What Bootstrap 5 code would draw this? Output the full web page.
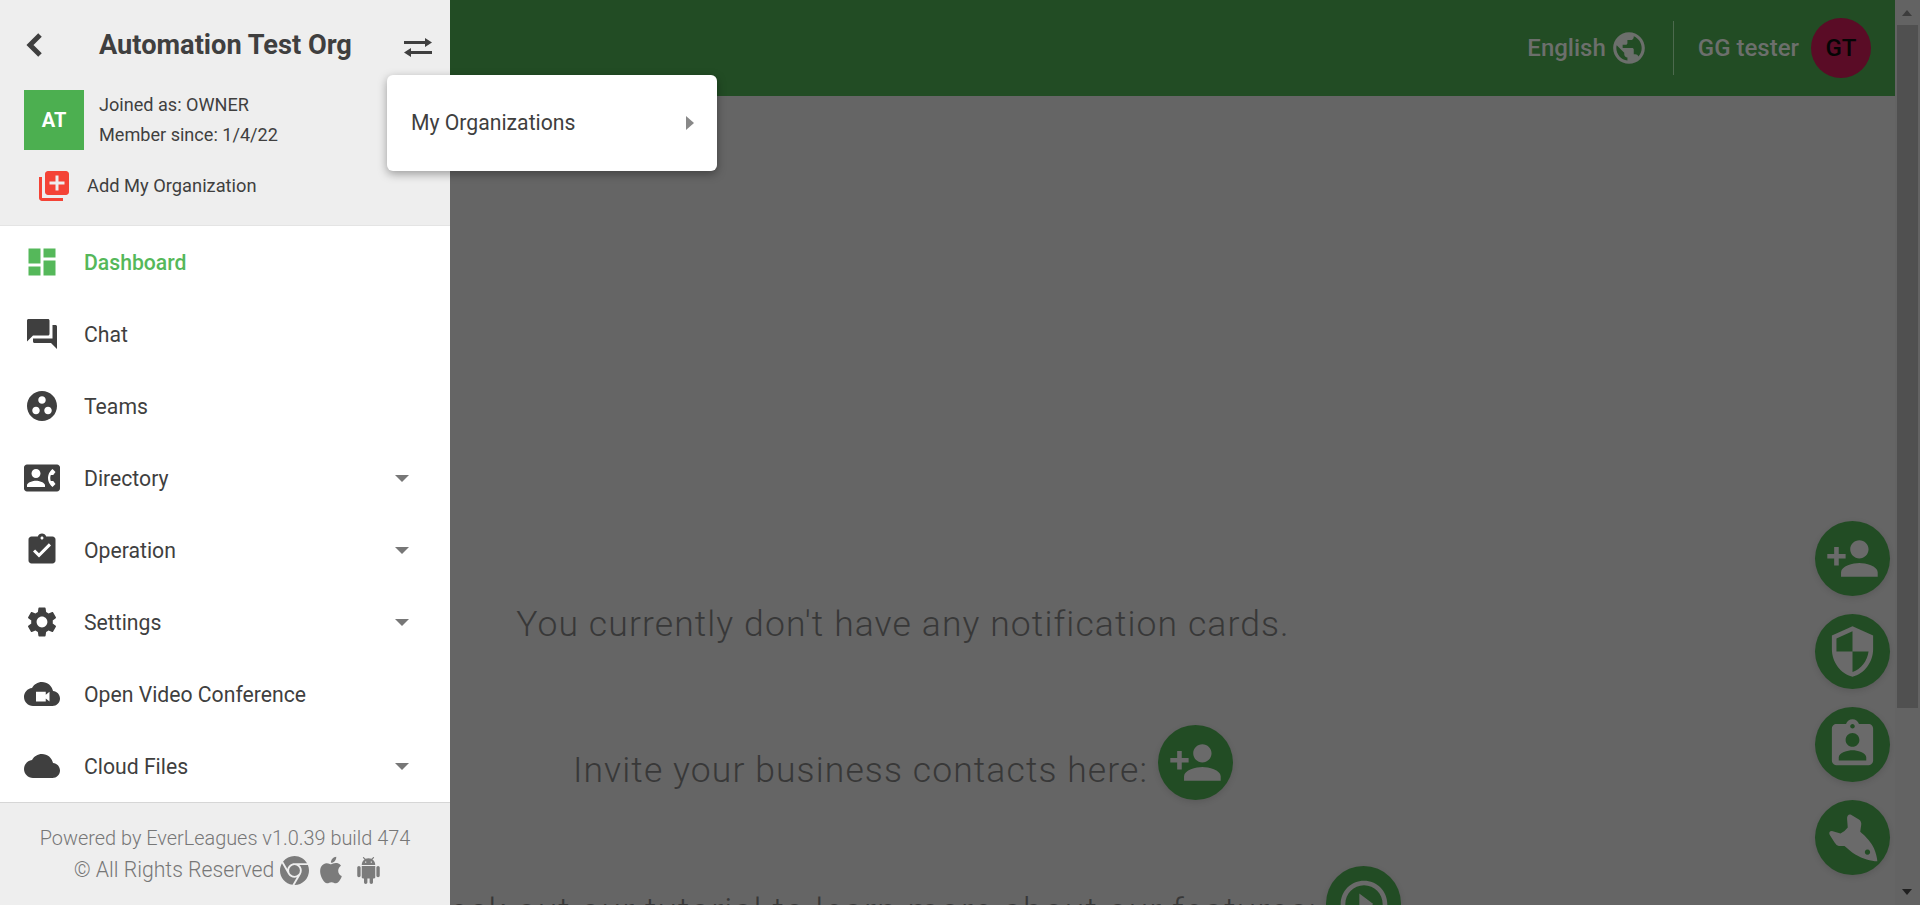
<!DOCTYPE html>
<html lang="en">
<head>
  <meta charset="UTF-8">
  <meta name="viewport" content="width=device-width, initial-scale=1.0">
  <title>EverLeagues - Dashboard</title>
  <link href="https://cdn.jsdelivr.net/npm/bootstrap@5.3.0/dist/css/bootstrap.min.css" rel="stylesheet">
  <style>
    html, body {
      height: 100%;
      overflow: hidden;
    }
    body {
      background-color: #656565;
      font-family: Roboto, "Liberation Sans", sans-serif;
      color: #3f3f3f;
    }
    /* Main page, dimmed by the open drawer */
    .page-col {
      width: 1895px;
      height: 905px;
    }
    .top-bar {
      height: 96px;
      background-color: #224c24;
      padding-right: 24px;
    }
    .top-label {
      font-size: 24px;
      font-weight: 500;
      color: #6c6f6c;
    }
    .top-divider {
      width: 1px;
      height: 54px;
      background-color: #4d6a4e;
      margin: 0 24px 0 25px;
    }
    .user-dot {
      width: 60px;
      height: 60px;
      margin-left: 12px;
      background-color: #5a0c26;
      color: #050505;
      font-size: 24px;
      font-weight: 500;
    }
    .notice-area {
      padding: 0 89px 0 0;
      font-size: 35.5px;
      font-weight: 300;
      letter-spacing: 1.1px;
      color: #383838;
      white-space: nowrap;
    }
    .notice-first { margin-top: 506px; height: 44px; line-height: 44px; }
    .notice-row { height: 76px; margin-top: 78px; gap: 10px; }
    .notice-row > span:first-child { padding-top: 18px; }
    .notice-cut { margin-top: 66px; gap: 9px; }
    .notice-cut > span:first-child { padding-top: 16px; }
    .fab-dot {
      width: 75px;
      height: 75px;
      flex: none;
      background-color: #224c24;
      box-shadow: 0 2px 6px rgba(0, 0, 0, .12);
    }
    .fab-stack {
      right: 5px;
      bottom: 30px;
      gap: 18px;
    }
    /* Fake browser scrollbar */
    .scroll-col {
      width: 25px;
      height: 905px;
      background-color: #636363;
    }
    .scroll-thumb {
      left: 2px;
      top: 25px;
      width: 21px;
      height: 683px;
      background-color: #505050;
    }
    .scroll-up, .scroll-down {
      left: 7px;
      width: 0;
      height: 0;
      border-left: 5.5px solid transparent;
      border-right: 5.5px solid transparent;
    }
    .scroll-up { top: 10px; border-bottom: 6px solid #3c3c3c; }
    .scroll-down { bottom: 10px; border-top: 6px solid #202020; }
    /* Drawer */
    .drawer {
      left: 0;
      top: 0;
      width: 450px;
      height: 905px;
      background-color: #fff;
    }
    .drawer-head {
      height: 226px;
      background-color: #eee;
      border-bottom: 1px solid #e4e4e4;
      flex: none;
    }
    .org-row {
      height: 90px;
      padding: 0 18px 0 24px;
    }
    .org-name {
      font-size: 27.2px;
      font-weight: 700;
      color: #3f3f3f;
      margin-left: 53px;
    }
    .org-swap { margin-top: 4px; }
    .org-tile {
      width: 60px;
      height: 60px;
      background-color: #4caf50;
      color: #fff;
      font-size: 20px;
      font-weight: 700;
      flex: none;
    }
    .org-meta {
      font-size: 18.1px;
      line-height: 30px;
      margin-left: 15px;
    }
    .org-add {
      margin-top: 21px;
      padding-left: 39px;
      font-size: 18.3px;
      line-height: 30px;
      gap: 18px;
    }
    .menu-item {
      height: 72px;
      border: 0;
      padding: 0 41px 0 24px;
      font-size: 21.2px;
      color: #3f3f3f;
      background: transparent;
    }
    .menu-item.is-on { color: #55b85a; font-weight: 500; }
    .menu-item.is-on svg { fill: #55b85a; }
    .menu-text { padding-top: 2px; }
    .menu-icon {
      width: 36px;
      height: 36px;
      margin-right: 24px;
      flex: none;
      fill: #3f3f3f;
    }
    .caret-down {
      width: 0;
      height: 0;
      border-left: 7px solid transparent;
      border-right: 7px solid transparent;
      border-top: 7px solid #777;
    }
    .drawer-foot {
      height: 103px;
      background-color: #eee;
      border-top: 1px solid #d6d6d6;
      flex: none;
      padding-top: 21px;
      font-size: 19.9px;
      font-weight: 300;
      line-height: 30px;
      color: #777;
    }
    .foot-icons { font-size: 21.2px; padding-left: 6px; }
    .foot-icons svg { fill: #7b7b7b; flex: none; margin-left: 6px; }
    .foot-icons svg:last-child { margin-left: 8px; }
    .org-menu {
      left: 387px;
      top: 75px;
      width: 330px;
      height: 96px;
      border: 0;
      border-radius: 6px;
      padding: 0 23px 0 24px;
      font-size: 21.2px;
      color: #3f3f3f;
      box-shadow: 0 3px 10px rgba(0, 0, 0, .35);
    }
    .caret-right {
      width: 0;
      height: 0;
      border-top: 7px solid transparent;
      border-bottom: 7px solid transparent;
      border-left: 8px solid #888;
    }
  </style>
</head>
<body>

  <div class="d-flex position-relative">
    <!-- Main page -->
    <div class="page-col position-relative overflow-hidden">
      <header class="top-bar d-flex align-items-center justify-content-end">
        <span class="top-label">English</span>
        <svg class="ms-1" width="38" height="38" viewBox="0 0 24 24" fill="#6c6f6c"><path d="M12 2C6.48 2 2 6.48 2 12s4.48 10 10 10 10-4.48 10-10S17.52 2 12 2zm-1 17.93c-3.95-.49-7-3.85-7-7.93 0-.62.08-1.21.21-1.79L9 15v1c0 1.1.9 2 2 2v1.93zm6.9-2.54c-.26-.81-1-1.39-1.9-1.39h-1v-3c0-.55-.45-1-1-1H8v-2h2c.55 0 1-.45 1-1V7h2c1.1 0 2-.9 2-2v-.41c2.93 1.19 5 4.06 5 7.41 0 2.08-.8 3.97-2.1 5.39z"/></svg>
        <span class="top-divider"></span>
        <span class="top-label">GG tester</span>
        <span class="user-dot rounded-circle d-flex align-items-center justify-content-center">GT</span>
      </header>

      <div class="notice-area">
        <div class="notice-first text-center">You currently don't have any notification cards.</div>
        <div class="notice-row d-flex align-items-center justify-content-center">
          <span>Invite your business contacts here:</span>
          <span class="fab-dot rounded-circle d-flex align-items-center justify-content-center">
            <svg width="55" height="55" viewBox="0 0 24 24" fill="#6a6a6a"><path d="M15 12c2.21 0 4-1.79 4-4s-1.79-4-4-4-4 1.79-4 4 1.79 4 4 4zm-9-2V7H4v3H1v2h3v3h2v-3h3v-2H6zm9 4c-2.67 0-8 1.34-8 4v2h16v-2c0-2.66-5.33-4-8-4z"/></svg>
          </span>
        </div>
        <div class="notice-cut d-flex align-items-center justify-content-center">
          <span>Check out our tutorial to learn more about our features:</span>
          <span class="fab-dot rounded-circle d-flex align-items-center justify-content-center">
            <svg width="56" height="56" viewBox="0 0 24 24" fill="#6a6a6a"><path d="M10 16.5l6-4.5-6-4.5v9zM12 2C6.48 2 2 6.48 2 12s4.48 10 10 10 10-4.48 10-10S17.52 2 12 2zm0 18c-4.41 0-8-3.59-8-8s3.59-8 8-8 8 3.59 8 8-3.59 8-8 8z"/></svg>
          </span>
        </div>
      </div>

      <div class="fab-stack position-absolute d-flex flex-column">
        <span class="fab-dot rounded-circle d-flex align-items-center justify-content-center">
          <svg width="55" height="55" viewBox="0 0 24 24" fill="#6a6a6a"><path d="M15 12c2.21 0 4-1.79 4-4s-1.79-4-4-4-4 1.79-4 4 1.79 4 4 4zm-9-2V7H4v3H1v2h3v3h2v-3h3v-2H6zm9 4c-2.67 0-8 1.34-8 4v2h16v-2c0-2.66-5.33-4-8-4z"/></svg>
        </span>
        <span class="fab-dot rounded-circle d-flex align-items-center justify-content-center">
          <svg width="55" height="55" viewBox="0 0 24 24" fill="#6a6a6a"><path d="M12 1L3 5v6c0 5.55 3.84 10.74 9 12 5.16-1.26 9-6.45 9-12V5l-9-4zm0 10.99h7c-.53 4.12-3.28 7.79-7 8.94V12H5V6.3l7-3.11v8.8z"/></svg>
        </span>
        <span class="fab-dot rounded-circle d-flex align-items-center justify-content-center">
          <svg width="55" height="55" viewBox="0 0 24 24" fill="#6a6a6a"><path d="M19 3h-4.18C14.4 1.84 13.3 1 12 1c-1.3 0-2.4.84-2.82 2H5c-1.1 0-2 .9-2 2v14c0 1.1.9 2 2 2h14c1.1 0 2-.9 2-2V5c0-1.1-.9-2-2-2zm-7 0c.55 0 1 .45 1 1s-.45 1-1 1-1-.45-1-1 .45-1 1-1zm0 4c1.66 0 3 1.34 3 3s-1.34 3-3 3-3-1.34-3-3 1.34-3 3-3zm6 12H6v-1.4c0-2 4-3.1 6-3.1s6 1.1 6 3.1V19z"/></svg>
        </span>
        <span class="fab-dot rounded-circle d-flex align-items-center justify-content-center">
          <svg width="50" height="50" viewBox="132 928 152 152" fill="#6a6a6a" fill-rule="evenodd"><path d="M282 1075C262 1074 238 1068 215 1054C202 1046 192 1036 182 1028L165 1028C160 1028 156 1024 152 1018L137 994C134 988 137 983 144 983L170 990L182 983L192 972L190 946C189 936 195 930 202 933L226 948C232 952 234 958 233 964L230 985C248 1000 264 1018 272 1036C278 1050 281 1063 282 1075ZM252 1039a8 8 0 1 0 .01 0Z"/></svg>
        </span>
      </div>
    </div>

    <!-- Scrollbar -->
    <div class="scroll-col position-relative">
      <span class="scroll-up position-absolute"></span>
      <span class="scroll-thumb position-absolute"></span>
      <span class="scroll-down position-absolute"></span>
    </div>

    <!-- Drawer -->
    <aside class="drawer position-absolute d-flex flex-column">
      <div class="drawer-head">
        <div class="org-row d-flex align-items-center">
          <svg width="22" height="28" viewBox="0 0 22 28" fill="none" stroke="#3f3f3f" stroke-width="5"><polyline points="16,4 6,14 16,24"/></svg>
          <span class="org-name flex-grow-1">Automation Test Org</span>
          <svg class="org-swap" width="28" height="19" viewBox="0 0 28 19" fill="#3f3f3f"><path d="M0 3h21V0l7 4.5L21 9V6H0zM28 13H7v-3l-7 4.5L7 19v-3h21z"/></svg>
        </div>
        <div class="d-flex align-items-center ps-4">
          <div class="org-tile d-flex align-items-center justify-content-center">AT</div>
          <div class="org-meta">
            <div>Joined as: OWNER</div>
            <div>Member since: 1/4/22</div>
          </div>
        </div>
        <div class="org-add d-flex align-items-center">
          <svg width="30" height="30" viewBox="2 2 20 20" fill="#f44336"><path d="M4 6H2v14c0 1.1.9 2 2 2h14v-2H4V6zm16-4H8c-1.1 0-2 .9-2 2v12c0 1.1.9 2 2 2h12c1.1 0 2-.9 2-2V4c0-1.1-.9-2-2-2zm-1 9h-4v4h-2v-4H9V9h4V5h2v4h4v2z"/></svg>
          <span>Add My Organization</span>
        </div>
      </div>

      <div class="list-group list-group-flush flex-grow-1">
        <a href="#" class="list-group-item menu-item is-on d-flex align-items-center">
          <svg class="menu-icon" viewBox="0 0 24 24"><path d="M3 13h8V3H3v10zm0 8h8v-6H3v6zm10 0h8V11h-8v10zm0-18v6h8V3h-8z"/></svg><span class="menu-text">Dashboard</span>
        </a>
        <a href="#" class="list-group-item menu-item d-flex align-items-center">
          <svg class="menu-icon" viewBox="0 0 24 24"><path d="M21 6h-2v9H6v2c0 .55.45 1 1 1h11l4 4V7c0-.55-.45-1-1-1zm-4 6V3c0-.55-.45-1-1-1H3c-.55 0-1 .45-1 1v14l4-4h10c.55 0 1-.45 1-1z"/></svg><span class="menu-text">Chat</span>
        </a>
        <a href="#" class="list-group-item menu-item d-flex align-items-center">
          <svg class="menu-icon" viewBox="0 0 24 24"><path d="M12 2C6.48 2 2 6.48 2 12s4.48 10 10 10 10-4.48 10-10S17.52 2 12 2zM8 17.5c-1.38 0-2.5-1.12-2.5-2.5s1.12-2.5 2.5-2.5 2.5 1.12 2.5 2.5-1.12 2.5-2.5 2.5zM9.5 8c0-1.38 1.12-2.5 2.5-2.5s2.5 1.12 2.5 2.5-1.12 2.5-2.5 2.5S9.5 9.38 9.5 8zm6.5 9.5c-1.38 0-2.5-1.12-2.5-2.5s1.12-2.5 2.5-2.5 2.5 1.12 2.5 2.5-1.12 2.5-2.5 2.5z"/></svg><span class="menu-text">Teams</span>
        </a>
        <a href="#" class="list-group-item menu-item d-flex align-items-center">
          <svg class="menu-icon" viewBox="0 0 24 24"><path d="M22 3H2C.9 3 0 3.9 0 5v14c0 1.1.9 2 2 2h20c1.1 0 1.99-.9 1.99-2L24 5c0-1.1-.9-2-2-2zM8 6c1.66 0 3 1.34 3 3s-1.34 3-3 3-3-1.34-3-3 1.34-3 3-3zm6 12H2v-1c0-2 4-3.1 6-3.1s6 1.1 6 3.1v1zm3.85-4h1.64L21 16l-1.99 1.99c-1.31-.98-2.28-2.38-2.73-3.99-.18-.64-.28-1.31-.28-2s.1-1.36.28-2c.45-1.62 1.42-3.01 2.73-3.99L21 8l-1.51 2h-1.64c-.22.63-.35 1.3-.35 2s.13 1.37.35 2z"/></svg><span class="menu-text">Directory</span>
          <span class="caret-down ms-auto"></span>
        </a>
        <a href="#" class="list-group-item menu-item d-flex align-items-center">
          <svg class="menu-icon" viewBox="0 0 24 24"><path d="M19 3h-4.18C14.4 1.84 13.3 1 12 1c-1.3 0-2.4.84-2.82 2H5c-1.1 0-2 .9-2 2v14c0 1.1.9 2 2 2h14c1.1 0 2-.9 2-2V5c0-1.1-.9-2-2-2zm-7 0c.55 0 1 .45 1 1s-.45 1-1 1-1-.45-1-1 .45-1 1-1zm-2 14l-4-4 1.41-1.41L10 14.17l6.59-6.59L18 9l-8 8z"/></svg><span class="menu-text">Operation</span>
          <span class="caret-down ms-auto"></span>
        </a>
        <a href="#" class="list-group-item menu-item d-flex align-items-center">
          <svg class="menu-icon" viewBox="0 0 24 24"><path d="M19.14 12.94c.04-.3.06-.61.06-.94 0-.32-.02-.64-.07-.94l2.03-1.58c.18-.14.23-.41.12-.61l-1.92-3.32c-.12-.22-.37-.29-.59-.22l-2.39.96c-.5-.38-1.03-.7-1.62-.94l-.36-2.54c-.04-.24-.24-.41-.48-.41h-3.84c-.24 0-.43.17-.47.41l-.36 2.54c-.59.24-1.13.57-1.62.94l-2.39-.96c-.22-.08-.47 0-.59.22L2.74 8.87c-.12.21-.08.47.12.61l2.03 1.58c-.05.3-.09.63-.09.94s.02.64.07.94l-2.03 1.58c-.18.14-.23.41-.12.61l1.92 3.32c.12.22.37.29.59.22l2.39-.96c.5.38 1.03.7 1.62.94l.36 2.54c.05.24.24.41.48.41h3.84c.24 0 .44-.17.47-.41l.36-2.54c.59-.24 1.13-.56 1.62-.94l2.39.96c.22.08.47 0 .59-.22l1.92-3.32c.12-.22.07-.47-.12-.61l-2.01-1.58zM12 15.6c-1.98 0-3.6-1.62-3.6-3.6s1.62-3.6 3.6-3.6 3.6 1.62 3.6 3.6-1.62 3.6-3.6 3.6z"/></svg><span class="menu-text">Settings</span>
          <span class="caret-down ms-auto"></span>
        </a>
        <a href="#" class="list-group-item menu-item d-flex align-items-center">
          <svg class="menu-icon" viewBox="0 0 24 24" fill-rule="evenodd"><path d="M19.35 10.04C18.67 6.59 15.64 4 12 4 9.11 4 6.6 5.64 5.35 8.04 2.34 8.36 0 10.91 0 14c0 3.31 2.69 6 6 6h13c2.76 0 5-2.24 5-5 0-2.64-2.05-4.78-4.65-4.96zM8 10.5h6.5v2l2.5-2v6.5l-2.5-2v2H8z"/></svg><span class="menu-text">Open Video Conference</span>
        </a>
        <a href="#" class="list-group-item menu-item d-flex align-items-center">
          <svg class="menu-icon" viewBox="0 0 24 24"><path d="M19.35 10.04C18.67 6.59 15.64 4 12 4 9.11 4 6.6 5.64 5.35 8.04 2.34 8.36 0 10.91 0 14c0 3.31 2.69 6 6 6h13c2.76 0 5-2.24 5-5 0-2.64-2.05-4.78-4.65-4.96z"/></svg><span class="menu-text">Cloud Files</span>
          <span class="caret-down ms-auto"></span>
        </a>
      </div>

      <div class="drawer-foot text-center">
        <div>Powered by EverLeagues v1.0.39 build 474</div>
        <div class="foot-icons d-flex align-items-center justify-content-center">
          <span>© All Rights Reserved</span>
          <svg width="29" height="29" viewBox="4 4 16 16"><path d="M12,20L15.46,14H15.45C15.79,13.41 16,12.73 16,12C16,10.8 15.46,9.73 14.62,9H19.41C19.79,9.93 20,10.94 20,12A8,8 0 0,1 12,20M4,12C4,10.54 4.39,9.18 5.07,8L8.54,14H8.55C9.24,15.19 10.5,16 12,16C12.45,16 12.88,15.91 13.29,15.77L10.89,19.91C7,19.37 4,16.04 4,12M15,12A3,3 0 0,1 12,15A3,3 0 0,1 9,12A3,3 0 0,1 12,9A3,3 0 0,1 15,12M12,4C14.96,4 17.54,5.61 18.92,8H12C10.06,8 8.45,9.38 8.08,11.21L5.7,7.08C7.16,5.21 9.44,4 12,4Z"/></svg>
          <svg width="32" height="32" viewBox="0 0 24 24"><path d="M18.71 19.5c-.83 1.24-1.71 2.45-3.05 2.47-1.34.03-1.77-.79-3.29-.79-1.53 0-2 .77-3.27.82-1.31.05-2.3-1.32-3.14-2.53C4.25 17 2.94 12.45 4.7 9.39c.87-1.52 2.43-2.48 4.12-2.51 1.28-.02 2.5.87 3.29.87.78 0 2.26-1.07 3.81-.91.65.03 2.47.26 3.64 1.98-.09.06-2.17 1.28-2.15 3.81.03 3.02 2.65 4.03 2.68 4.04-.03.07-.42 1.44-1.38 2.83M13 3.5c.73-.83 1.94-1.46 2.94-1.5.13 1.17-.34 2.35-1.04 3.19-.69.85-1.83 1.51-2.95 1.42-.15-1.15.41-2.35 1.05-3.11z"/></svg>
          <svg width="27" height="27" viewBox="1 0 22 24"><path d="M6 18c0 .55.45 1 1 1h1v3.5c0 .83.67 1.5 1.5 1.5s1.5-.67 1.5-1.5V19h2v3.5c0 .83.67 1.5 1.5 1.5s1.5-.67 1.5-1.5V19h1c.55 0 1-.45 1-1V8H6v10zM3.5 8C2.67 8 2 8.67 2 9.5v7c0 .83.67 1.5 1.5 1.5S5 17.33 5 16.5v-7C5 8.67 4.33 8 3.5 8zm17 0c-.83 0-1.5.67-1.5 1.5v7c0 .83.67 1.5 1.5 1.5s1.5-.67 1.5-1.5v-7c0-.83-.67-1.5-1.5-1.5zm-4.97-5.84l1.3-1.3c.2-.2.2-.51 0-.71-.2-.2-.51-.2-.71 0l-1.48 1.48C13.85 1.23 12.95 1 12 1c-.96 0-1.86.23-2.66.63L7.85.15c-.2-.2-.51-.2-.71 0-.2.2-.2.51 0 .71l1.31 1.31C6.97 3.26 6 5.01 6 7h12c0-1.99-.97-3.75-2.47-4.84zM10 5H9V4h1v1zm5 0h-1V4h1v1z"/></svg>
        </div>
      </div>
    </aside>

    <!-- Organization menu -->
    <div class="org-menu card position-absolute flex-row align-items-center justify-content-between">
      <span>My Organizations</span>
      <span class="caret-right"></span>
    </div>
  </div>

  <script src="https://cdn.jsdelivr.net/npm/bootstrap@5.3.0/dist/js/bootstrap.bundle.min.js"></script>
</body>
</html>
